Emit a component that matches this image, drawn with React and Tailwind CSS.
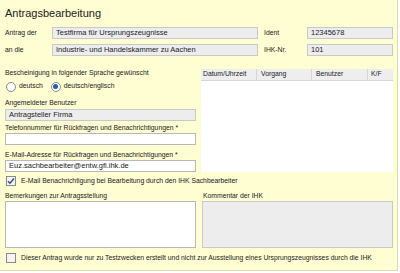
import React from "react";

const font = { fontFamily: '"Liberation Sans", Arial, sans-serif' };

function Field({ value, gray, className = "" }) {
  return (
    <div
      className={`h-[12px] flex items-center px-[3px] text-[7.5px] leading-none text-[#222] border ${
        gray ? "bg-[#ededed] border-[#c9c9c9]" : "bg-white border-[#b8b8b8]"
      } ${className}`}
    >
      {value}
    </div>
  );
}

function Label({ children, className = "" }) {
  return <div className={`text-[6.8px] leading-none text-[#222] ${className}`}>{children}</div>;
}

function Radio({ checked }) {
  return (
    <div className="w-[10px] h-[10px] rounded-full border border-[#8a8a8a] bg-white flex items-center justify-center shrink-0">
      {checked && <div className="w-[5px] h-[5px] rounded-full bg-[#1f5fae]" />}
    </div>
  );
}

function Check({ checked }) {
  return (
    <div className="w-[10px] h-[10px] border border-[#8a8a8a] bg-[#f4f4f4] flex items-center justify-center shrink-0">
      {checked && (
        <svg width="8" height="8" viewBox="0 0 8 8">
          <path d="M1 4.2 L3 6.2 L7 1.5" fill="none" stroke="#1f4f9a" strokeWidth="1.4" />
        </svg>
      )}
    </div>
  );
}

export default function App() {
  return (
    <div className="w-[400px] h-[273px] bg-white" style={font}>
      <div className="w-[398px] h-[271px] bg-[#fffdd2] border-r border-b border-[#dcdab4] pl-[5px] pt-[6px]">
        <div className="text-[11px] leading-[14px] text-[#222]">Antragsbearbeitung</div>
        <div className="mt-[7px] flex items-center">
          <Label className="w-[47px]">Antrag der</Label>
          <Field gray value="Testfirma für Ursprungszeugnisse" className="w-[206px]" />
          <Label className="w-[43px] ml-[6px]">Ident</Label>
          <Field gray value="12345678" className="w-[86px]" />
        </div>
        <div className="mt-[5px] flex items-center">
          <Label className="w-[47px]">an die</Label>
          <Field gray value="Industrie- und Handelskammer zu Aachen" className="w-[206px]" />
          <Label className="w-[43px] ml-[6px]">IHK-Nr.</Label>
          <Field gray value="101" className="w-[86px]" />
        </div>
        <div className="mt-[13px] flex">
          <div className="w-[191px]">
            <Label className="mt-[1px]">Bescheinigung in folgender Sprache gewünscht</Label>
            <div className="mt-[5px] flex items-center ml-[1px]">
              <Radio />
              <span className="ml-[3px] text-[6.8px] leading-none text-[#222]">deutsch</span>
              <div className="ml-[8px]"><Radio checked /></div>
              <span className="ml-[3px] text-[6.8px] leading-none text-[#222]">deutsch/englisch</span>
            </div>
            <Label className="mt-[8px]">Angemeldeter Benutzer</Label>
            <Field gray value="Antragsteller Firma" className="mt-[2px] w-[191px]" />
            <Label className="mt-[4px]">Telefonnummer für Rückfragen und Benachrichtigungen *</Label>
            <Field value="" className="mt-[2px] w-[191px] h-[11px]" />
            <Label className="mt-[7px]">E-Mail-Adresse für Rückfragen und Benachrichtigungen *</Label>
            <Field value="Euz.sachbearbeiter@entw.gfi.ihk.de" className="mt-[1px] w-[191px]" />
          </div>
          <div className="ml-[5px] w-[192px] h-[103px] bg-white">
            <div className="flex h-[12px] bg-[#eeeeee] border-b border-[#d6d6d6] text-[6.8px] leading-none text-[#222]">
              <div className="w-[56px] flex items-center pl-[2px] border-r border-[#d6d6d6]">Datum/Uhrzeit</div>
              <div className="w-[55px] flex items-center pl-[4px] border-r border-[#d6d6d6]">Vorgang</div>
              <div className="w-[56px] flex items-center pl-[4px] border-r border-[#d6d6d6]">Benutzer</div>
              <div className="flex-1 flex items-center pl-[3px]">K/F</div>
            </div>
          </div>
        </div>
        <div className="mt-[4px] flex items-center ml-[1px]">
          <Check checked />
          <span className="ml-[5px] text-[6.8px] leading-none text-[#222]">
            E-Mail Benachrichtigung bei Bearbeitung durch den IHK Sachbearbeiter
          </span>
        </div>
        <div className="mt-[7px] flex">
          <div className="w-[191px]">
            <Label>Bemerkungen zur Antragsstellung</Label>
            <div className="mt-[1px] h-[47px] bg-white border border-[#b8b8b8]" />
          </div>
          <div className="ml-[6px] w-[191px]">
            <Label className="ml-[1px]">Kommentar der IHK</Label>
            <div className="mt-[1px] h-[47px] bg-[#ededed] border border-[#c9c9c9]" />
          </div>
        </div>
        <div className="mt-[5px] flex items-center ml-[1px]">
          <Check />
          <span className="ml-[5px] text-[6.8px] leading-none text-[#222]">
            Dieser Antrag wurde nur zu Testzwecken erstellt und nicht zur Ausstellung eines Ursprungszeugnisses durch die IHK
          </span>
        </div>
      </div>
    </div>
  );
}
